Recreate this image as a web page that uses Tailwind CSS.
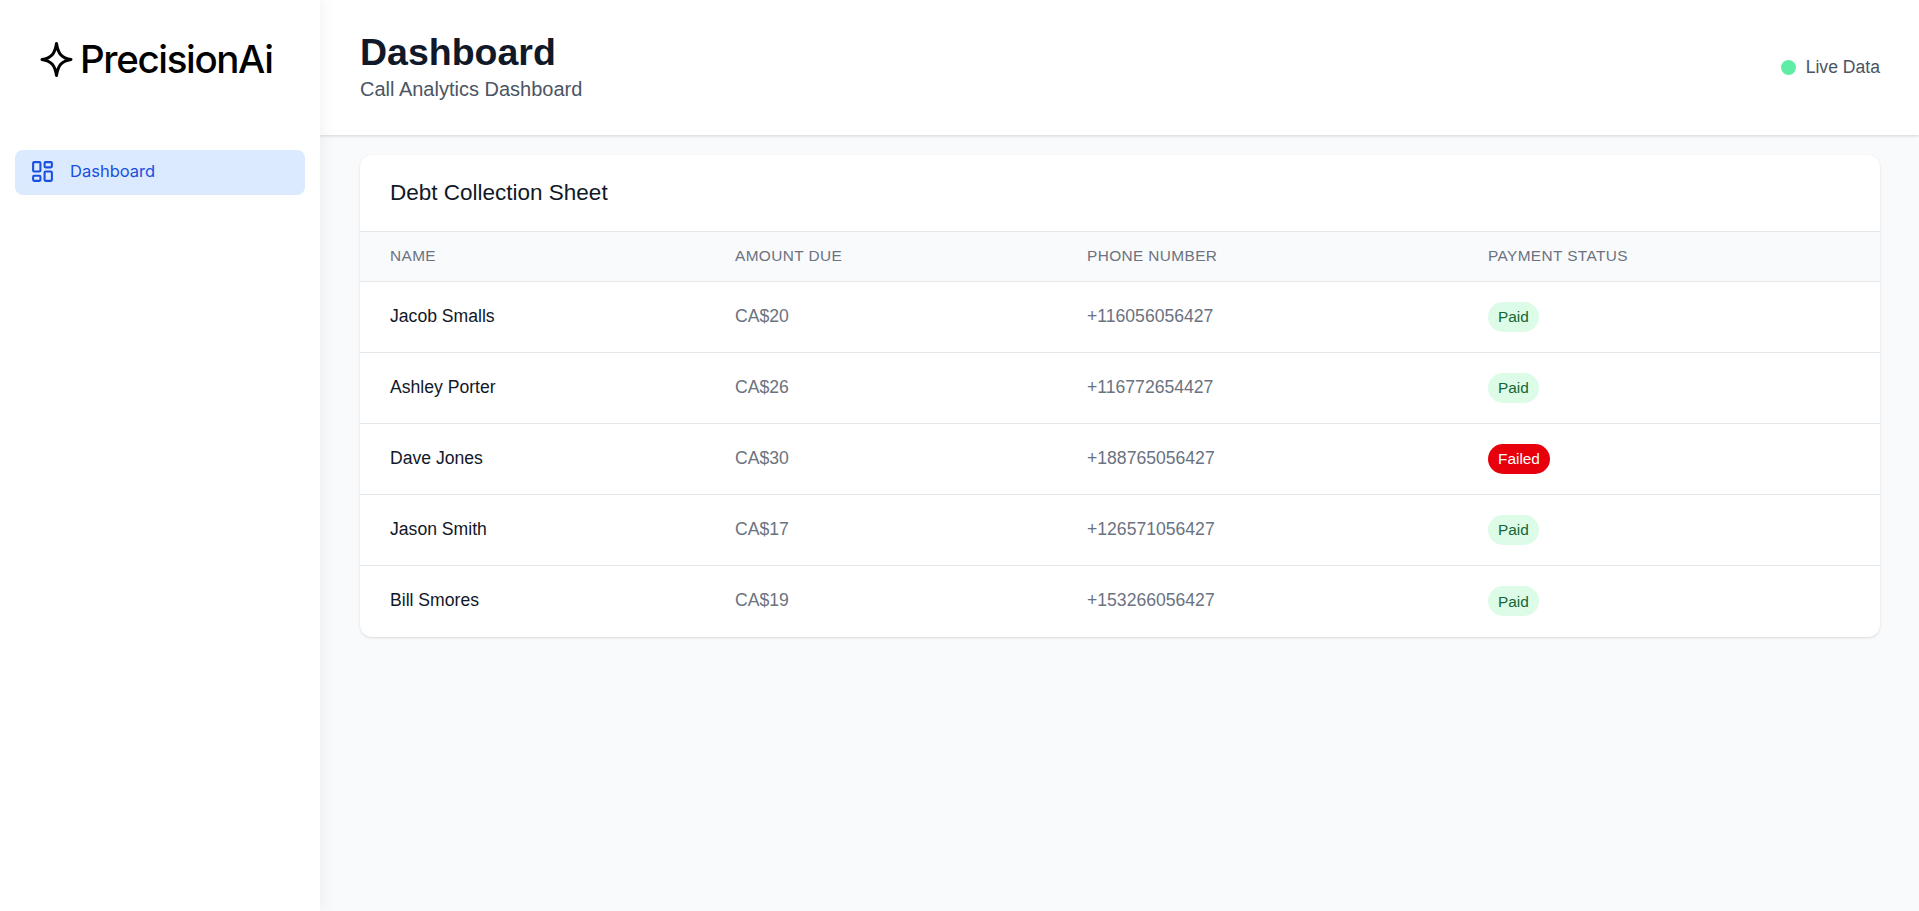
<!DOCTYPE html>
<html lang="en">

<head>
    <meta charset="UTF-8">
    <title>Dashboard</title>
    <script src="https://cdn.jsdelivr.net/npm/@tailwindcss/browser@4"></script>
</head>

<body class="h-[911px] overflow-hidden bg-[#f9fafb] flex font-['Liberation_Sans',Arial,sans-serif]">
    <aside class="w-[320px] shrink-0 h-full bg-white shadow-[2px_0_15px_rgba(0,0,0,0.06)] z-10 px-[15px]">
        <div class="h-[150px] flex items-start pt-[41px] pl-[25px] font-['Inter',sans-serif] text-black">
            <svg class="w-[33px] h-[37px] shrink-0 mr-[7px]" viewBox="0 0 33 37" fill="none" stroke="currentColor" stroke-width="3" stroke-linejoin="round">
                <path d="M16.500 2.500C18 12.500 21.500 17 31 18.500C21.500 20 18 24.500 16.500 34.500C15 24.500 11.500 20 2 18.500C11.500 17 15 12.500 16.500 2.500Z" />
            </svg>
            <span class="text-[38.500px] leading-[37px] font-medium tracking-[-1.350px]">PrecisionAi</span>
        </div>
        <nav>
            <a href="#" class="h-[45px] flex items-center gap-[15px] pl-[15px] pb-[2px] rounded-lg bg-[#dbeafe] text-[#1a4fe0] font-['Inter',sans-serif]">
                <svg class="w-[25px] h-[25px]" viewBox="0 0 24 24" fill="none" stroke="currentColor" stroke-width="2" stroke-linecap="round" stroke-linejoin="round">
                    <rect x="3" y="3" width="7" height="9" rx="1" />
                    <rect x="14" y="3" width="7" height="5" rx="1" />
                    <rect x="14" y="12" width="7" height="9" rx="1" />
                    <rect x="3" y="16" width="7" height="5" rx="1" />
                </svg>
                <span class="text-[16.500px]">Dashboard</span>
            </a>
        </nav>
    </aside>

    <div class="flex-1 min-w-0 flex flex-col">
        <header class="h-[135px] shrink-0 bg-white shadow-[0_1px_3px_rgba(0,0,0,0.15)] flex items-center justify-between pl-[40px] pr-[39px]">
            <div>
                <h1 class="text-[37.500px] leading-[40px] font-bold text-[#111827]">Dashboard</h1>
                <p class="text-[20px] leading-[30px] text-[#4b5563] mt-[2px]">Call Analytics Dashboard</p>
            </div>
            <div class="flex items-center gap-[10px]">
                <span class="w-[15px] h-[15px] rounded-full bg-[#5eeda5]"></span>
                <span class="text-[17.600px] text-[#4b5563]">Live Data</span>
            </div>
        </header>

        <main class="pt-[20px] pl-[40px] pr-[39px]">
            <div class="bg-white rounded-xl shadow-sm overflow-hidden">
                <h2 class="h-[76px] flex items-center px-[30px] pb-[1px] text-[22.500px] text-[#111827]">Debt Collection Sheet</h2>
                <table class="w-full table-fixed text-left">
                    <thead class="bg-[#f9fafb] text-[15.400px] text-[#6b7280] uppercase tracking-wide">
                        <tr class="h-[50px] border-y border-gray-200">
                            <th class="w-[375px] pl-[30px] pb-[2px] font-normal">Name</th>
                            <th class="w-[352px] pb-[2px] font-normal">Amount Due</th>
                            <th class="w-[401px] pb-[2px] font-normal">Phone Number</th>
                            <th class="pb-[2px] font-normal">Payment Status</th>
                        </tr>
                    </thead>
                    <tbody class="text-[17.600px]">
                        <tr class="h-[71px] border-b border-gray-200">
                            <td class="pl-[30px] pb-[2px] text-[#111827]">Jacob Smalls</td>
                            <td class="pb-[2px] text-[#6b7280]">CA$20</td>
                            <td class="pb-[2px] text-[#6b7280]">+116056056427</td>
                            <td><span class="inline-flex h-[30px] items-center px-[10px] rounded-full bg-[#dcfce7] text-[#166534] text-[15.400px]">Paid</span></td>
                        </tr>
                        <tr class="h-[71px] border-b border-gray-200">
                            <td class="pl-[30px] pb-[2px] text-[#111827]">Ashley Porter</td>
                            <td class="pb-[2px] text-[#6b7280]">CA$26</td>
                            <td class="pb-[2px] text-[#6b7280]">+116772654427</td>
                            <td><span class="inline-flex h-[30px] items-center px-[10px] rounded-full bg-[#dcfce7] text-[#166534] text-[15.400px]">Paid</span></td>
                        </tr>
                        <tr class="h-[71px] border-b border-gray-200">
                            <td class="pl-[30px] pb-[2px] text-[#111827]">Dave Jones</td>
                            <td class="pb-[2px] text-[#6b7280]">CA$30</td>
                            <td class="pb-[2px] text-[#6b7280]">+188765056427</td>
                            <td><span class="inline-flex h-[30px] items-center px-[10px] rounded-full bg-[#e7000b] text-white text-[15.400px]">Failed</span></td>
                        </tr>
                        <tr class="h-[71px] border-b border-gray-200">
                            <td class="pl-[30px] pb-[2px] text-[#111827]">Jason Smith</td>
                            <td class="pb-[2px] text-[#6b7280]">CA$17</td>
                            <td class="pb-[2px] text-[#6b7280]">+126571056427</td>
                            <td><span class="inline-flex h-[30px] items-center px-[10px] rounded-full bg-[#dcfce7] text-[#166534] text-[15.400px]">Paid</span></td>
                        </tr>
                        <tr class="h-[71px]">
                            <td class="pl-[30px] pb-[2px] text-[#111827]">Bill Smores</td>
                            <td class="pb-[2px] text-[#6b7280]">CA$19</td>
                            <td class="pb-[2px] text-[#6b7280]">+153266056427</td>
                            <td><span class="inline-flex h-[30px] items-center px-[10px] rounded-full bg-[#dcfce7] text-[#166534] text-[15.400px]">Paid</span></td>
                        </tr>
                    </tbody>
                </table>
            </div>
        </main>
    </div>
</body>

</html>
